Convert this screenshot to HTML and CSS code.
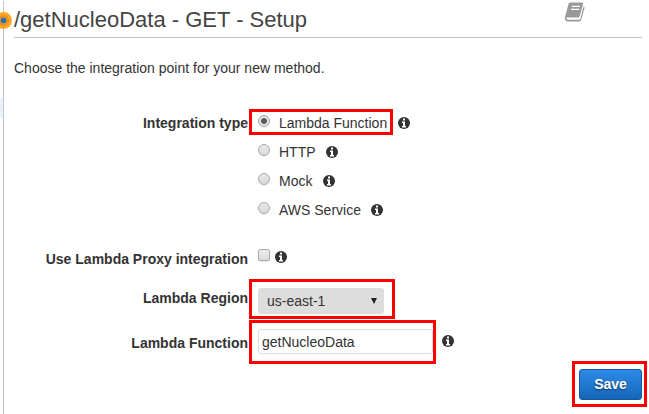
FILE: index.html
```html
<!DOCTYPE html>
<html lang="en">
<head>
<meta charset="utf-8">
<title>Method setup</title>
<link rel="stylesheet" href="styles.css">
</head>
<body>
<svg class="defs" aria-hidden="true">
  <symbol id="info" viewBox="0 0 12 12">
    <circle cx="6" cy="6" r="6" fill="#333"/>
    <path fill="#fff" d="M5 1.500h2v2H5zM4 4.500h3V9h1v1.500H4V9h1V6H4z"/>
  </symbol>
</svg>
<div class="app">
  <aside class="rail"><span class="rail-item"></span><span class="handle"></span></aside>
  <main class="panel">
    <header class="head">
      <h1>/getNucleoData - GET - Setup</h1>
      <svg class="book" viewBox="0 0 21 20">
        <path fill="#999" d="M6.400 .5H17.500c1.200 0 1.800.8 1.500 1.800L15.800 14c-.4 1.200-.9 1.600-2.100 1.600H3.200c-.8 0-1 .4-.8 1 .2.800.9 1.100 1.800 1.100h10.700c.7 0 1.200-.3 1.500-1L19.600 4.500c.8.3 1.100 1 .9 1.800L17.300 17.600c-.4 1.200-1.300 1.900-2.500 1.900H4C2 19.500.4 17.700.9 15.500L4.400 2.300C4.800 1.100 5.300.5 6.400.5z"/>
        <path stroke="#fff" stroke-width="1.300" d="M7.700 4.400h8.300M7 7.400h8.300"/>
      </svg>
    </header>
    <p class="intro">Choose the integration point for your new method.</p>
    <form class="form">
      <div class="row types">
        <span class="label">Integration type</span>
        <div class="options">
          <div class="option"><i class="radio on"></i><span>Lambda Function</span><svg class="info"><use href="#info"/></svg></div>
          <div class="option"><i class="radio"></i><span>HTTP</span><svg class="info"><use href="#info"/></svg></div>
          <div class="option"><i class="radio"></i><span>Mock</span><svg class="info"><use href="#info"/></svg></div>
          <div class="option"><i class="radio"></i><span>AWS Service</span><svg class="info"><use href="#info"/></svg></div>
        </div>
        <span class="mark mark-type"></span>
      </div>
      <div class="row proxy">
        <span class="label">Use Lambda Proxy integration</span>
        <div class="control"><i class="check"></i><svg class="info"><use href="#info"/></svg></div>
      </div>
      <div class="row region">
        <span class="label">Lambda Region</span>
        <div class="select"><span>us-east-1</span><svg class="arrow" viewBox="0 0 6 6"><path fill="#222" d="M0 0h6L3 6z"/></svg></div>
        <span class="mark mark-region"></span>
      </div>
      <div class="row function">
        <span class="label">Lambda Function</span>
        <div class="control"><div class="input">getNucleoData</div><svg class="info"><use href="#info"/></svg></div>
        <span class="mark mark-function"></span>
      </div>
      <div class="actions"><div class="save">Save<span class="mark mark-save"></span></div></div>
    </form>
  </main>
</div>
</body>
</html>
```
FILE: styles.css
```css
* { box-sizing: border-box; }
body {
  margin: 0;
  background: #fff;
  color: #333;
  font: 14px/20px "Liberation Sans", Arial, sans-serif;
  overflow: hidden;
}
.defs { position: absolute; width: 0; height: 0; }
.app { display: flex; height: 414px; }
.rail {
  position: relative;
  width: 4px;
  height: 413px;
  margin-top: 1px;
  border-right: 1px solid #c4c4c4;
  padding-top: 97px;
}
.rail-item { display: block; width: 3px; height: 20px; background: #e6f2fd; }
.handle {
  position: absolute;
  left: -5px;
  top: 11px;
  width: 17px;
  height: 17px;
  border-radius: 50%;
  background: radial-gradient(circle, #1b6fc0 0 2.4px, #e8941c 3.2px 5px, #ffa526 6px);
}
.panel { width: 628px; margin-left: 10px; }
.head {
  display: flex;
  height: 38px;
  border-bottom: 1px solid #c4c4c4;
}
h1 {
  width: 550px;
  margin: 7px 0 0;
  font-size: 22px;
  line-height: 26px;
  font-weight: 400;
  color: #444;
}
.book { width: 21px; height: 20px; margin-top: 2px; }
.intro { margin: 20px 0 35px; }
.row {
  position: relative;
  display: grid;
  grid-template-columns: 234px 1fr;
  column-gap: 10px;
  align-items: start;
}
.label { text-align: right; font-weight: 700; }
.types { height: 136px; }
.option { display: flex; height: 29px; }
.option .info { margin: 4px 0 0 10.5px; }
.info { display: block; width: 12px; height: 12px; flex: none; }
.radio {
  width: 12px;
  height: 12px;
  margin: 2px 9px 0 0;
  border: 1px solid #aaa;
  border-radius: 50%;
  background: linear-gradient(#e8e8e8, #d9d9d9);
  box-shadow: 0 1px 1px #0001;
}
.radio.on { background: radial-gradient(circle, #5a5a5a 2.5px, #e2e2e2 3.3px); }
.control { display: flex; }
.proxy { height: 39px; }
.check {
  width: 12px;
  height: 12px;
  margin-right: 5px;
  border: 1px solid #aaa;
  border-radius: 2px;
  background: linear-gradient(#eee, #dcdcdc);
  box-shadow: 0 1px 1px #0001;
}
.proxy .info { margin-top: 2px; }
.region { height: 41px; }
.select {
  display: flex;
  justify-content: space-between;
  width: 126px;
  height: 26px;
  padding: 3px 7px 0 9px;
  border-radius: 3px;
  background: #ddd;
}
.arrow { width: 6px; height: 6px; margin-top: 7px; }
.function { height: 40px; }
.function .label { padding-top: 4px; }
.input {
  width: 175px;
  height: 25px;
  padding: 2px 3px;
  border: 1px solid #ddd;
  border-radius: 3px;
}
.function .info { margin: 6px 0 0 9px; }
.actions { display: flex; justify-content: flex-end; }
.save {
  position: relative;
  width: 63px;
  height: 31px;
  border: 1px solid #17599c;
  border-radius: 3px;
  background: linear-gradient(#2d8ae8, #1566b7);
  color: #fff;
  font-weight: 700;
  line-height: 29px;
  text-align: center;
  text-shadow: 0 1px 2px #0008;
}
.mark { position: absolute; border: 3px solid #f00; }
.mark-type { left: 235px; top: -4px; width: 144px; height: 26px; }
.mark-region { left: 235px; top: -9px; width: 146px; height: 40px; }
.mark-function { left: 235px; top: -9px; width: 187px; height: 44px; }
.mark-save { left: -8px; top: -9px; width: 75px; height: 46px; }
```
